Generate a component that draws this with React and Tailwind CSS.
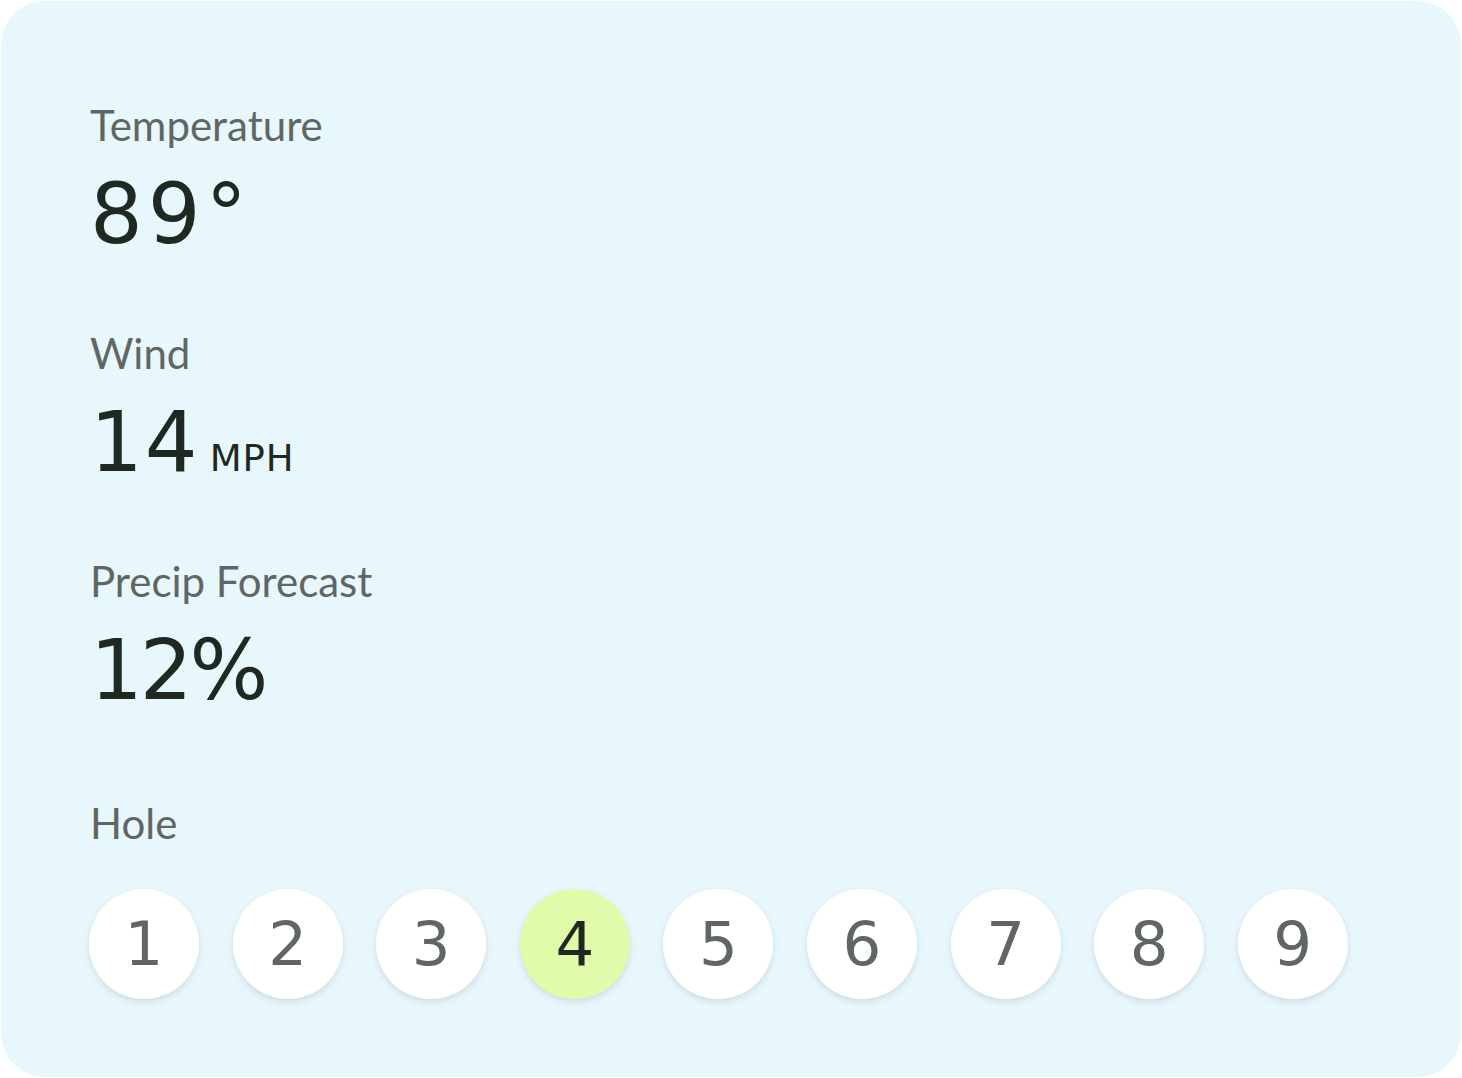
import { useState } from 'react';

const labelCls = "text-[42px] leading-[48px] text-[#5f6663] font-['Lato','Liberation_Sans',sans-serif]";
const valueCls = "text-[83px] leading-[96px] text-[#1f2922] font-['DejaVu_Sans','Liberation_Sans',sans-serif]";

const Stat = ({ label, value, unit, tracking }) => (
    <div className="flex flex-col">
        <span className={labelCls}>{label}</span>
        <div className="mt-[18px] flex items-baseline">
            <span className={`${valueCls} ${tracking}`}>{value}</span>
            {unit && (
                <span className="ml-[10px] text-[37px] text-[#1f2922] font-['DejaVu_Sans','Liberation_Sans',sans-serif] tracking-[1px]">{unit}</span>
            )}
        </div>
    </div>
);

const App = () => {
    const [hole, setHole] = useState(4);
    const holes = [1, 2, 3, 4, 5, 6, 7, 8, 9];

    return (
        <div className="h-[1078px] w-full bg-white p-[1px]">
            <div className="flex h-[1076px] flex-col rounded-[44px] bg-[#e8f7fc] pl-[89px] pt-[100px]">
                <div className="flex flex-col gap-[66px]">
                    <Stat label="Temperature" value="89°" tracking="tracking-[5px]" />
                    <Stat label="Wind" value="14" unit="MPH" tracking="tracking-[2px]" />
                    <Stat label="Precip Forecast" value="12%" tracking="tracking-[-3px]" />
                </div>

                <div className="mt-[80px] flex flex-col">
                    <span className={labelCls}>Hole</span>
                    <div className="-ml-[1px] mt-[42px] flex gap-[33.6px]">
                        {holes.map((h) => (
                            <button
                                key={h}
                                onClick={() => setHole(h)}
                                className={`flex h-[110px] w-[110px] items-center justify-center rounded-full text-[61px] font-['DejaVu_Sans','Liberation_Sans',sans-serif] shadow-[0_3px_6px_rgba(120,150,160,0.25)] ${
                                    hole === h ? 'bg-[#e1fbab] text-[#1f2922]' : 'bg-white text-[#5f6663]'
                                }`}
                            >
                                {h}
                            </button>
                        ))}
                    </div>
                </div>
            </div>
        </div>
    );
};

export default App;
